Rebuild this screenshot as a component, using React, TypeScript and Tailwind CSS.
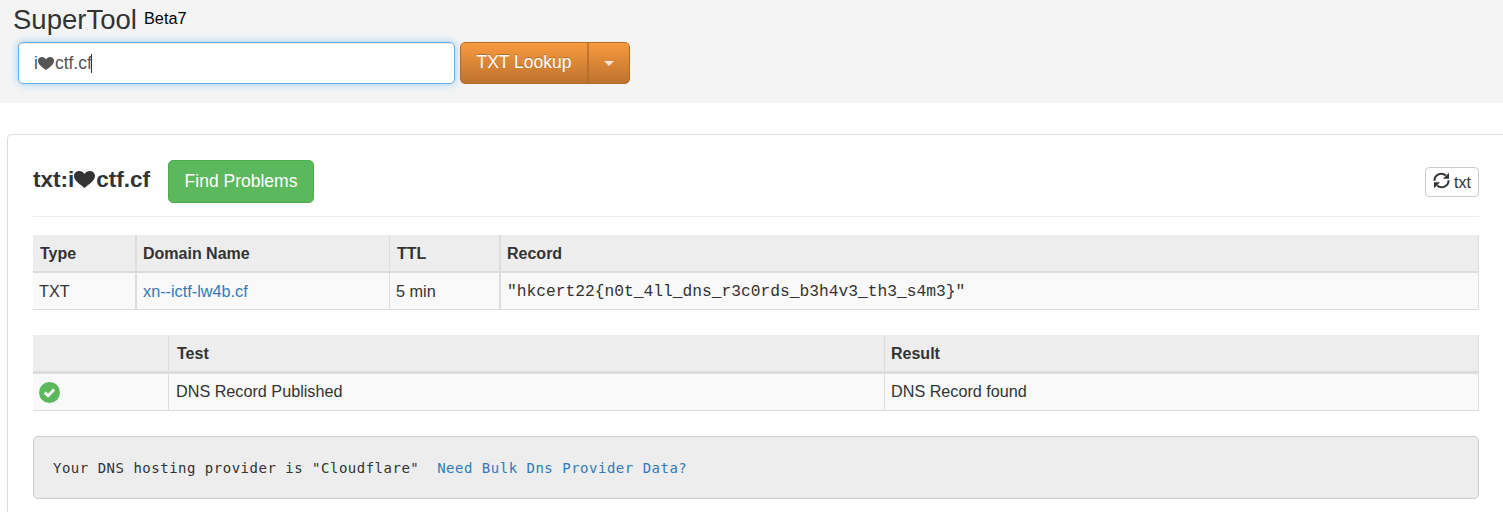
import React from 'react';

function Heart({ className }: { className: string }) {
  return (
    <svg viewBox="0 0 20 17" preserveAspectRatio="none" className={className} role="img" aria-label={'\u2764'}>
      <path fill="currentColor" d="M10 3.1C11 1.2 12.9 0 15 0c2.900 0 5 2.200 5 5.100C20 9.800 14.500 13.200 10 17C5.500 13.200 0 9.800 0 5.100C0 2.200 2.100 0 5 0C7.100 0 9 1.200 10 3.100z" />
    </svg>
  );
}

function SearchHeader() {
  return (
    <header className="h-[103px] bg-[#f4f4f4] pl-[13px] pt-1">
      <div className="flex h-[38px] items-start">
        <h1 className="w-[123px] text-[27.5px] leading-[32px] text-[#333]">SuperTool</h1>
        <span className="ml-2 pt-[5px] text-[16.25px] leading-[18px] text-black">Beta7</span>
      </div>
      <div className="ml-[5px] flex">
        <div className="flex h-[42px] w-[437px] items-center rounded-[5px] border border-[#66afe9] bg-white pl-[15px] pt-px text-[17.5px] text-[#555] shadow-[inset_0_1px_1px_rgba(0,0,0,0.075),0_0_8px_rgba(102,175,233,0.6)]">
          i<Heart className="mr-px h-[13px] w-4" /><span>ctf.cf</span>
          <span className="-ml-px h-[19px] w-px bg-[#333]" />
        </div>
        <div className="ml-[5px] flex h-[42px] w-[170px] rounded-[5px] border border-[#b46b2a] bg-linear-to-b from-[#f89a3f] to-[#bd732e] text-white">
          <button className="w-[126px] pb-[2px] text-[17.5px] [text-shadow:0_-1px_0_rgba(0,0,0,0.25)]">TXT Lookup</button>
          <button className="flex flex-1 items-center justify-center border-l-2 border-[#b46b2a]/75">
            <svg width="10" height="5" viewBox="0 0 10 5" className="mr-px mt-px fill-[#fbe5d2]"><path d="M0 0h10L5 5z" /></svg>
          </button>
        </div>
      </div>
    </header>
  );
}

function RefreshIcon() {
  return (
    <svg width="17" height="17" viewBox="0 0 17 17" fill="none" stroke="#333" strokeWidth="2" className="-mt-[3px]">
      <path d="M1.5 8.7A6.8 6.8 0 0 1 12.8 3.5" />
      <path d="M15.5 8.3A6.8 6.8 0 0 1 4.2 13.5" />
      <path d="M16 0.7v6h-6zM1 16.3v-6h6z" fill="#333" stroke="none" />
    </svg>
  );
}

function RecordTable() {
  return (
    <section className="mt-[18px] border-r border-[#ddd] text-[16.25px]">
      <div className="grid h-[38px] grid-cols-[102px_254px_110px_1fr] grid-rows-[36px] border-b-2 border-[#ddd] bg-[#ededed] text-base font-bold leading-[37px]">
        <div className="pl-[7px]">Type</div>
        <div className="border-l-2 border-[#ddd] pl-1.5">Domain Name</div>
        <div className="border-l border-[#ddd] pl-[7px]">TTL</div>
        <div className="border-l-2 border-[#ddd] pl-1.5">Record</div>
      </div>
      <div className="grid h-[37px] grid-cols-[102px_254px_110px_1fr] grid-rows-[36px] border-b border-[#ddd] bg-[#f9f9f9] leading-[37px]">
        <div className="pl-1.5">TXT</div>
        <div className="border-l-2 border-[#ddd] pl-1.5 text-[#337ab7]">xn--ictf-lw4b.cf</div>
        <div className="border-l border-[#ddd] pl-1.5">5 min</div>
        <div className="border-l-2 border-[#ddd] pl-1.5 font-['Liberation_Mono',monospace] leading-[38px]">{'"hkcert22{n0t_4ll_dns_r3c0rds_b3h4v3_th3_s4m3}"'}</div>
      </div>
    </section>
  );
}

function TestTable() {
  return (
    <section className="mt-[25px] border-r border-[#ddd] text-[16.2px]">
      <div className="grid h-[39px] grid-cols-[135px_716px_1fr] grid-rows-[36px] border-b-3 border-[#ddd] bg-[#ededed] text-base font-bold leading-[37px]">
        <div />
        <div className="border-l border-[#ddd] pl-2">Test</div>
        <div className="border-l border-[#ddd] pl-1.5">Result</div>
      </div>
      <div className="grid h-[37px] grid-cols-[135px_716px_1fr] grid-rows-[36px] border-b border-[#ddd] bg-[#f9f9f9] leading-[35px]">
        <div className="flex items-center pl-1.5">
          <svg width="21" height="21" viewBox="0 0 21 21">
            <circle cx="10.5" cy="10.5" r="10.5" fill="#5cb85c" />
            <path d="M5.8 10.5l3.3 3.3 6-6.3" fill="none" stroke="white" strokeWidth="2.7" />
          </svg>
        </div>
        <div className="border-l border-[#ddd] pl-[7px]">DNS Record Published</div>
        <div className="border-l border-[#ddd] pl-1.5">DNS Record found</div>
      </div>
    </section>
  );
}

export default function App() {
  return (
    <div className="h-[512px] overflow-hidden bg-white font-['Liberation_Sans',Arial,sans-serif] text-base text-[#333]">
      <SearchHeader />
      <main className="ml-[7px] mt-[31px] h-[400px] rounded-tl-[5px] border-l border-t border-[#ddd] pl-[25px] pr-6 pt-[25px]">
        <div className="flex h-[57px] items-start border-b border-[#eee]">
          <h2 className="flex w-[135px] items-center whitespace-nowrap pt-[7px] text-[22.5px] font-bold leading-[25px]">
            txt:i<Heart className="mr-px mb-px h-[17px] w-[21px]" />ctf.cf
          </h2>
          <button className="h-[43px] w-[146px] rounded-[5px] border border-[#4cae4c] bg-[#5cb85c] pb-px text-[17.5px] text-white">Find Problems</button>
          <button className="ml-auto mt-[7px] flex h-[30px] w-[54px] items-center justify-center gap-1 rounded-[4px] border border-[#ccc] bg-white">
            <RefreshIcon />
            <span className="pt-px">txt</span>
          </button>
        </div>
        <RecordTable />
        <TestTable />
        <div className="mt-[25px] h-[63px] whitespace-pre rounded-[5px] border border-[#ccc] bg-[#ededed] pl-[19px] font-['DejaVu_Sans_Mono',monospace] text-[14px] tracking-[0.505px] leading-[62px]">
          {'Your DNS hosting provider is "Cloudflare"  '}
          <a className="text-[#337ab7]">Need Bulk Dns Provider Data?</a>
        </div>
      </main>
    </div>
  );
}
